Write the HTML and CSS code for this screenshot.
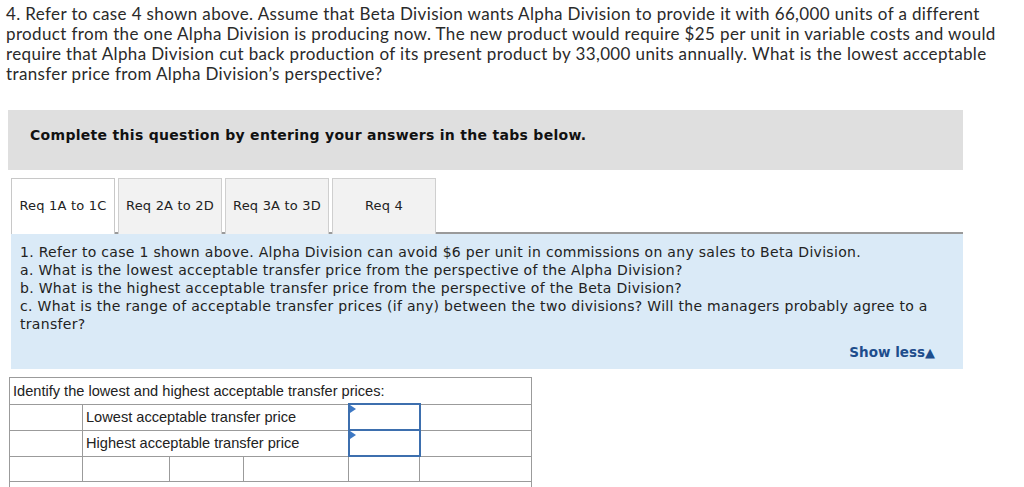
FILE: index.html
```html
<!DOCTYPE html>
<html lang="en">

<head>
	<meta charset="utf-8">
	<title>Req 1A to 1C</title>
	<link rel="stylesheet" href="styles.css">
</head>

<body>
	<!-- Question text -->
	<p class="question">4. Refer to case 4 shown above. Assume that Beta Division wants Alpha Division to provide it with 66,000 units of a different<br>
	product from the one Alpha Division is producing now. The new product would require $25 per unit in variable costs and would<br>
	require that Alpha Division cut back production of its present product by 33,000 units annually. What is the lowest acceptable<br>
	transfer price from Alpha Division’s perspective?</p>

	<div class="notice">Complete this question by entering your answers in the tabs below.</div>

	<!-- Tabs -->
	<div class="tabs">
		<div class="tab active">Req 1A to 1C</div>
		<div class="tab">Req 2A to 2D</div>
		<div class="tab">Req 3A to 3D</div>
		<div class="tab">Req 4</div>
	</div>

	<div class="panel">
		<p>1. Refer to case 1 shown above. Alpha Division can avoid $6 per unit in commissions on any sales to Beta Division.<br>
		a. What is the lowest acceptable transfer price from the perspective of the Alpha Division?<br>
		b. What is the highest acceptable transfer price from the perspective of the Beta Division?<br>
		c. What is the range of acceptable transfer prices (if any) between the two divisions? Will the managers probably agree to a<br>
		transfer?</p>
		<p class="less">Show less<span class="arrow">&#9650;</span></p>
	</div>

	<!-- Answer table -->
	<table class="answers">
		<colgroup>
			<col style="width:73px">
			<col style="width:87px">
			<col style="width:74px">
			<col style="width:105px">
			<col style="width:71px">
			<col style="width:112px">
		</colgroup>
		<tr class="head">
			<td colspan="6">Identify the lowest and highest acceptable transfer prices:</td>
		</tr>
		<tr>
			<td></td>
			<td colspan="3">Lowest acceptable transfer price</td>
			<td class="input"></td>
			<td></td>
		</tr>
		<tr>
			<td></td>
			<td colspan="3">Highest acceptable transfer price</td>
			<td class="input"></td>
			<td></td>
		</tr>
		<tr>
			<td></td>
			<td></td>
			<td></td>
			<td></td>
			<td></td>
			<td></td>
		</tr>
		<tr>
			<td colspan="6"></td>
		</tr>
	</table>
</body>

</html>
```

FILE: styles.css
```css
body {
	margin: 0;
	background-color: #fff;
	color: #222;
}

.question {
	margin: 4px 0 0 0;
	padding: 0 0 0 6px;
	white-space: nowrap;
	font-family: Lato, sans-serif;
	font-size: 17px;
	letter-spacing: 0.37px;
	line-height: 20px;
	color: #2a2a2a;
}

/* Grey notice box */
.notice {
	margin: 26px 0 0 8px;
	width: 933px;
	height: 43px;
	padding: 17px 0 0 22px;
	background-color: #dfdfdf;
	font-family: "DejaVu Sans", Verdana, sans-serif;
	font-weight: bold;
	font-size: 14px;
	letter-spacing: 0.3px;
	line-height: 16px;
	color: #111;
}

/* Tabs */
.tabs {
	display: flex;
	gap: 3px;
	margin: 8px 0 -2px 11px;
}

.tab {
	box-sizing: border-box;
	width: 104px;
	height: 56px;
	padding-top: 19px;
	border: 1px solid #cfcfcf;
	border-bottom: none;
	background-color: #f2f2f2;
	font-family: "DejaVu Sans", Verdana, sans-serif;
	font-size: 13px;
	letter-spacing: 0.2px;
	text-align: center;
	color: #222;
}

.tab.active {
	background-color: #fff;
	border-color: #c8c8c8;
}

.panel {
	margin-left: 11px;
	width: 915px;
	padding: 9px 28px 7px 9px;
	border-top: 2px solid #9a9a9a;
	background-color: #daeaf7;
	font-family: "DejaVu Sans", Verdana, sans-serif;
	font-size: 14px;
	letter-spacing: 0.3px;
	line-height: 18px;
	color: #222;
}

.panel p {
	margin: 0;
}

.less {
	margin-top: 10px !important;
	text-align: right;
	font-weight: bold;
	font-size: 13.5px;
	letter-spacing: 0;
	color: #1e4d8c;
}

.arrow {
	font-size: 13px;
}

/* Answer table */
.answers {
	margin: 8px 0 0 9px;
	border-collapse: collapse;
	table-layout: fixed;
	width: 522px;
	font-family: "Liberation Sans", Arial, sans-serif;
	font-size: 14.6px;
	color: #222;
}

.answers td {
	border: 1px solid #9b9b9b;
	height: 24px;
	padding: 0 3px;
}

.answers .head td {
	height: 25px;
}

.answers td.input {
	position: relative;
	border: 2px solid #3d6fae;
}

.answers td.input::before {
	content: "";
	position: absolute;
	left: 0;
	top: 0;
	border-left: 6px solid #3d78c4;
	border-top: 4px solid transparent;
	border-bottom: 4px solid transparent;
}
```
